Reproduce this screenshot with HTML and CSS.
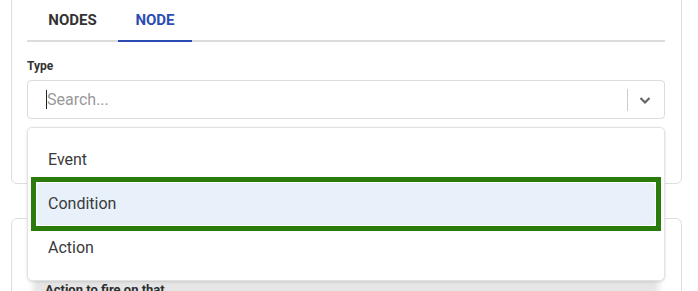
FILE: index.html
```html
<!DOCTYPE html>
<html lang="en">
<head>
  <meta charset="UTF-8">
  <title>Node editor</title>
  <link rel="stylesheet" href="styles.css">
</head>
<body>
  <div class="panel">
    <div class="card top-card">
      <div class="tabs">
        <div class="tab tab-nodes">NODES</div>
        <div class="tab tab-node active">NODE</div>
      </div>

      <label class="field-label">Type</label>
      <div class="select">
        <div class="select-control">
          <span class="caret"></span>
          <span class="placeholder">Search...</span>
          <span class="select-sep"></span>
          <svg class="chevron" width="20" height="20" viewBox="0 0 20 20">
            <path d="M5.5 8l4.5 4.5 4.5-4.5" fill="none" stroke="#666" stroke-width="2.2"/>
          </svg>
        </div>

        <ul class="menu">
          <li class="menu-item"><span>Event</span></li>
          <li class="menu-item focused"><span>Condition</span></li>
          <li class="menu-item"><span>Action</span></li>
        </ul>
      </div>
    </div>

    <div class="card bottom-card">
      <div class="card-title">Action to fire on that</div>
    </div>
  </div>
</body>
</html>
```

FILE: styles.css
```css
html, body {
  margin: 0;
  height: 100%;
  overflow: hidden;
  background-color: #fff;
  font-family: Roboto, "Liberation Sans", sans-serif;
  color: #333;
}

.panel {
  width: 671px;
  margin-left: 11px;
  margin-top: -11px;
}

.card {
  border: 1px solid #dedede;
  border-radius: 6px;
  background: #fff;
  padding: 10px 15px 0 15px;
}

.top-card {
  height: 195px;
  box-sizing: border-box;
}

.bottom-card {
  margin-top: 34px;
  height: 120px;
  padding-top: 63px;
}

/* tabs */
.tabs {
  display: flex;
  border-bottom: 2px solid #dcdcdc;
  width: 638px;
}

.tab {
  height: 40px;
  line-height: 40px;
  font-size: 15px;
  font-weight: 700;
  color: #333;
  text-align: center;
  margin-bottom: -2px;
  border-bottom: 2px solid transparent;
}

.tab-nodes { width: 91px; }
.tab-node { width: 74px; }

.tab.active {
  color: #2b4db3;
  border-bottom-color: #2b4db3;
}

.field-label {
  display: block;
  margin-top: 17px;
  font-size: 12px;
  font-weight: 700;
  line-height: 14px;
  color: #333;
}

/* select */
.select {
  position: relative;
  width: 638px;
  margin-top: 7px;
}

.select-control {
  display: flex;
  align-items: center;
  height: 37px;
  border: 1px solid #dcdcdc;
  border-radius: 4px;
  padding-left: 18px;
}

.caret {
  width: 1px;
  height: 19px;
  background: #222;
}

.placeholder {
  flex: 1;
  font-size: 16px;
  color: #999;
}

.select-sep {
  width: 1px;
  height: 22px;
  background: #ccc;
}

.chevron {
  margin: 0 9px 0 7px;
}

.menu {
  position: absolute;
  z-index: 5;
  left: 0;
  right: 0;
  top: 47px;
  margin: 0;
  padding: 10px 8px;
  list-style: none;
  background: #fff;
  border: 1px solid #e2e2e2;
  border-radius: 5px;
  box-shadow: 0 1px 3px rgba(0, 0, 0, 0.12), 0 20px 6px -6px rgba(0, 0, 0, 0.1);
}

.menu-item {
  position: relative;
  height: 44px;
  line-height: 44px;
  padding: 0 12px;
  font-size: 16px;
  color: #3a3a3a;
}

.menu-item span {
  position: relative;
}

.menu-item.focused {
  outline: 5px solid #2a7a0c;
}

.menu-item.focused::before {
  content: "";
  position: absolute;
  inset: 1px;
  background: #e8f1fa;
  border-radius: 4px;
}

.card-title {
  font-size: 13px;
  font-weight: 700;
  color: #333;
  padding-left: 18px;
}
```
